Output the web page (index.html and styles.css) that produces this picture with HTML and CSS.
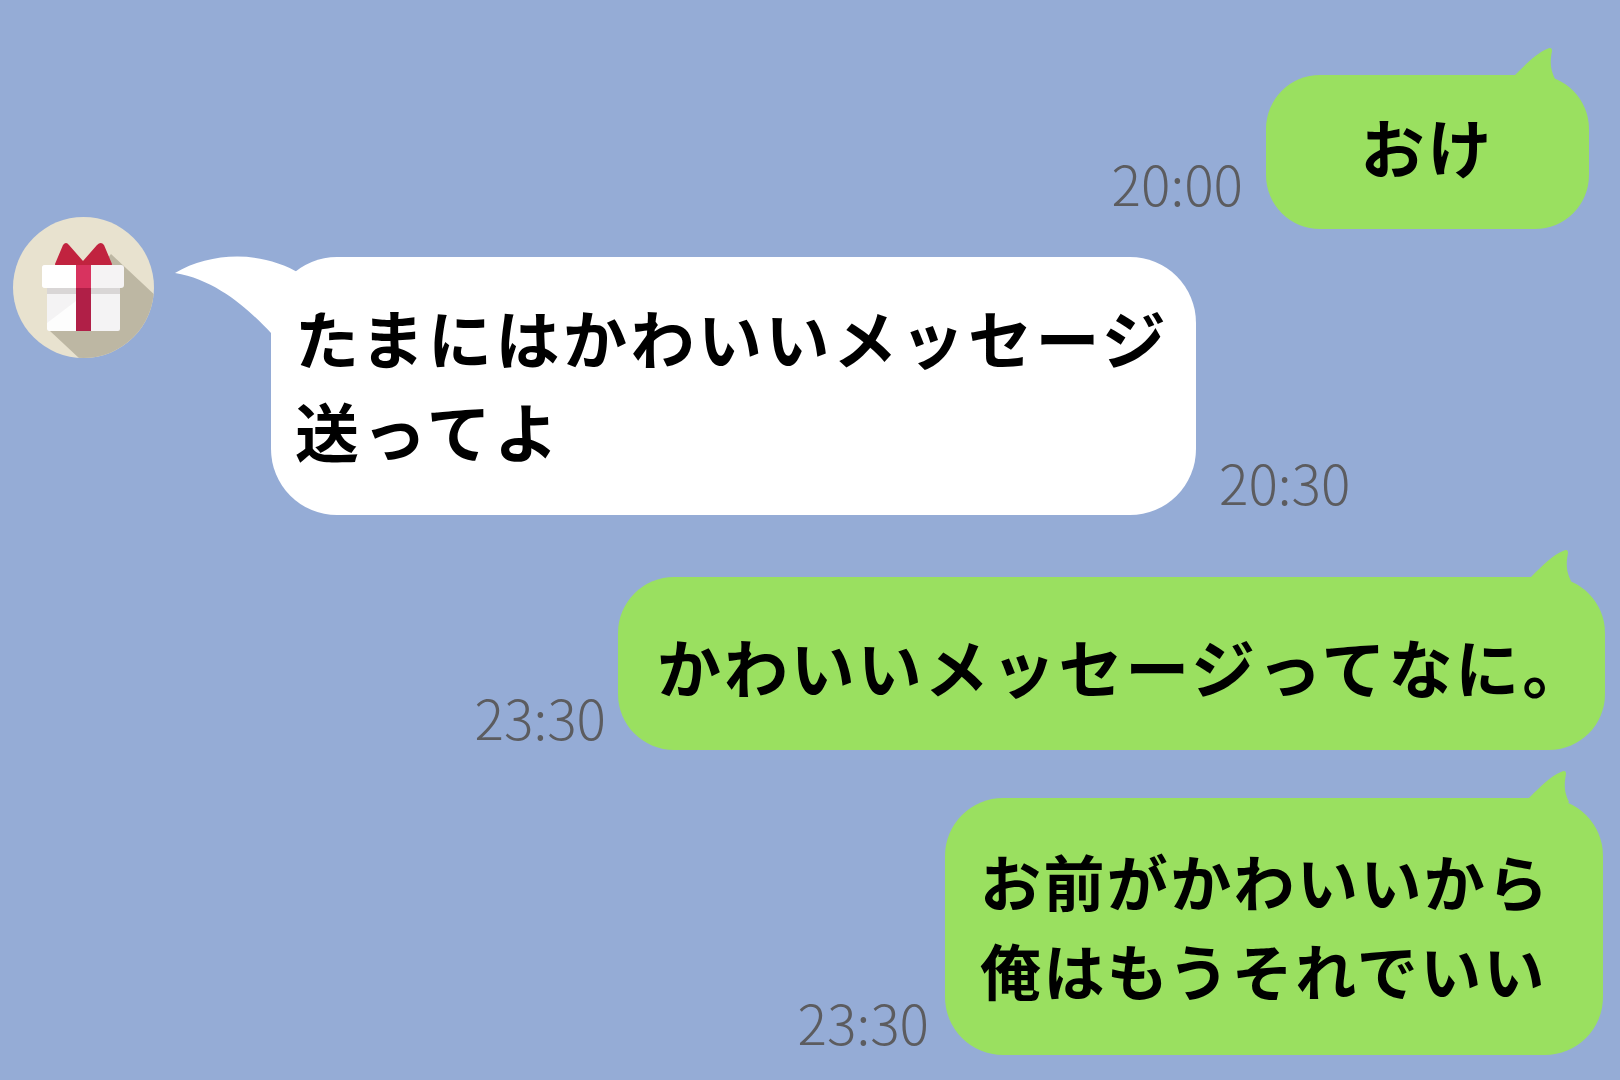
FILE: index.html
```html
<!DOCTYPE html>
<html lang="ja">
<head>
    <meta charset="UTF-8">
    <meta name="viewport" content="width=device-width, initial-scale=1.0">
    <title>トーク</title>
    <link rel="stylesheet" href="styles.css">
</head>
<body>
    <div class="chat">
        <div class="row row-first">
            <span class="time time-first">20:00</span>
            <div class="bubble green bubble-first">
                おけ
                <svg class="tail" viewBox="0 0 60 50"><path d="M16 30 C28 18 38 8 48 4 Q53 1 53 6 C51 16 51 24 56 34 L40 50 L16 50 Z"/></svg>
            </div>
        </div>

        <div class="row row-friend">
            <svg class="avatar" viewBox="0 0 141 141">
                <defs><clipPath id="circle-clip"><circle cx="70.5" cy="70.5" r="70.5"/></clipPath></defs>
                <circle cx="70.5" cy="70.5" r="70.5" fill="#e8e2cf"/>
                <polygon clip-path="url(#circle-clip)" points="98,37 143,79 143,142 67,142 37,114" fill="#bdb7a3"/>
                <path d="M42 47 L50 28 Q53 24 56 28 L70 44 L84 28 Q88 24 91 28 L99 47 Q99 49 96 49 L45 49 Q42 49 42 47 Z" fill="#c1233f"/>
                <rect x="34" y="70" width="73" height="44" rx="2" fill="#f4f3f4"/>
                <polygon points="34,106 34,112 36,114 63,114 63,84" fill="#fdfdfd"/>
                <rect x="29" y="48" width="82" height="23" rx="3" fill="#f5f3f4"/>
                <path d="M32 48 H70 V71 H32 Q29 71 29 68 V51 Q29 48 32 48 Z" fill="#ffffff"/>
                <rect x="34" y="71" width="73" height="6" fill="#d9d6d6"/>
                <rect x="63" y="48" width="15" height="23" fill="#d8335f"/>
                <rect x="63" y="71" width="15" height="43" fill="#b01f47"/>
            </svg>
            <div class="bubble white bubble-friend">
                たまにはかわいいメッセージ<br>送ってよ
                <svg class="tail-friend" viewBox="0 0 140 90"><path d="M4 21 C40 0 90 -2 130 22 L150 60 L100 85 L100 81 C82 62 48 28 4 21 Z"/></svg>
            </div>
            <span class="time time-friend">20:30</span>
        </div>

        <div class="row row-third">
            <span class="time time-third">23:30</span>
            <div class="bubble green bubble-third">
                かわいいメッセージってなに。
                <svg class="tail" viewBox="0 0 60 50"><path d="M16 30 C28 18 38 8 48 4 Q53 1 53 6 C51 16 51 24 56 34 L40 50 L16 50 Z"/></svg>
            </div>
        </div>

        <div class="row row-fourth">
            <span class="time time-fourth">23:30</span>
            <div class="bubble green bubble-fourth">
                お前がかわいいから<br>俺はもうそれでいい
                <svg class="tail" viewBox="0 0 60 50"><path d="M16 30 C28 18 38 8 48 4 Q53 1 53 6 C51 16 51 24 56 34 L40 50 L16 50 Z"/></svg>
            </div>
        </div>
    </div>
</body>
</html>
```

FILE: styles.css
```css
html, body {
    margin: 0;
    height: 100%;
    overflow: hidden;
}

body {
    background-color: #95acd6;
    font-family: "Noto Sans CJK JP", "Noto Sans", sans-serif;
}

.chat {
    display: flex;
    flex-direction: column;
    padding-top: 75px;
}

.row {
    display: flex;
    align-items: flex-end;
    justify-content: flex-end;
}

.row-first {
    padding-right: 31px;
}

.row-friend {
    justify-content: flex-start;
    margin-top: 28px;
    padding-left: 13px;
}

.row-third {
    margin-top: 62px;
    padding-right: 15px;
}

.row-fourth {
    margin-top: 48px;
    padding-right: 17px;
}

.bubble {
    position: relative;
    color: #000;
    font-weight: 700;
    white-space: nowrap;
}

.green {
    background-color: #9ae060;
    fill: #9ae060;
}

.white {
    background-color: #fff;
    fill: #fff;
}

.bubble-first {
    box-sizing: border-box;
    width: 323px;
    height: 154px;
    padding-top: 27px;
    border-radius: 54px;
    font-size: 64px;
    line-height: 86px;
    letter-spacing: 3px;
    text-align: center;
}

.bubble-friend {
    box-sizing: border-box;
    width: 925px;
    height: 258px;
    margin-left: 118px;
    padding: 33px 0 0 24px;
    border-radius: 66px;
    font-size: 64px;
    line-height: 93px;
    letter-spacing: 3.5px;
    align-self: flex-start;
}

.bubble-third {
    box-sizing: border-box;
    width: 987px;
    height: 173px;
    padding: 41px 0 0 39px;
    border-radius: 56px;
    font-size: 64px;
    line-height: 95px;
    letter-spacing: 2.9px;
}

.bubble-fourth {
    box-sizing: border-box;
    width: 658px;
    height: 257px;
    padding: 38px 0 0 35px;
    border-radius: 58px;
    font-size: 61px;
    line-height: 89px;
    letter-spacing: 2.4px;
}

.tail {
    position: absolute;
    top: -30px;
    right: 30px;
    width: 60px;
    height: 50px;
}

.tail-friend {
    position: absolute;
    top: -5px;
    left: -100px;
    width: 140px;
    height: 90px;
    overflow: visible;
}

.avatar {
    width: 141px;
    height: 141px;
    flex: none;
    align-self: flex-start;
    margin-top: -40px;
    margin-right: -1px;
}

.time {
    color: #5c5c5f;
    font-size: 55px;
    font-weight: 300;
    line-height: 60px;
    white-space: nowrap;
}

.time-first {
    margin-right: 23px;
    padding-bottom: 17px;
}

.time-friend {
    margin-left: 23px;
    padding-bottom: 4px;
}

.time-third {
    margin-right: 12px;
    padding-bottom: 4px;
}

.time-fourth {
    margin-right: 16px;
    padding-bottom: 4px;
}
```
